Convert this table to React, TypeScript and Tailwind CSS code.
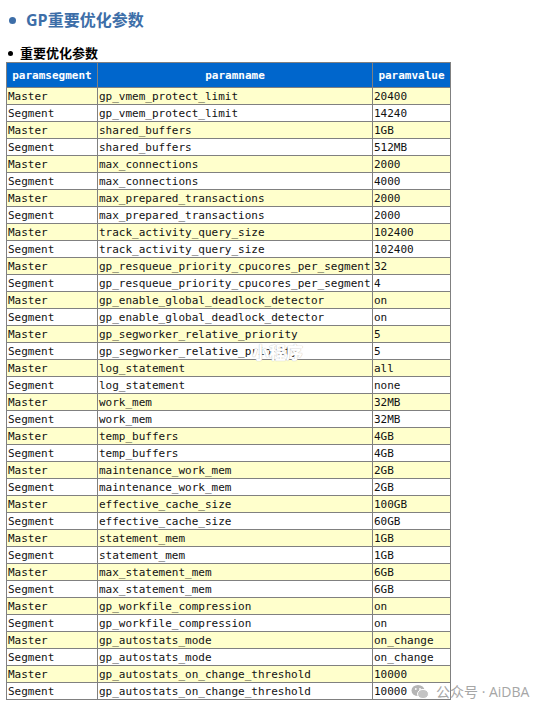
const rows: [string, string][] = [
  ['gp_vmem_protect_limit', '20400'],
  ['gp_vmem_protect_limit', '14240'],
  ['shared_buffers', '1GB'],
  ['shared_buffers', '512MB'],
  ['max_connections', '2000'],
  ['max_connections', '4000'],
  ['max_prepared_transactions', '2000'],
  ['max_prepared_transactions', '2000'],
  ['track_activity_query_size', '102400'],
  ['track_activity_query_size', '102400'],
  ['gp_resqueue_priority_cpucores_per_segment', '32'],
  ['gp_resqueue_priority_cpucores_per_segment', '4'],
  ['gp_enable_global_deadlock_detector', 'on'],
  ['gp_enable_global_deadlock_detector', 'on'],
  ['gp_segworker_relative_priority', '5'],
  ['gp_segworker_relative_priority', '5'],
  ['log_statement', 'all'],
  ['log_statement', 'none'],
  ['work_mem', '32MB'],
  ['work_mem', '32MB'],
  ['temp_buffers', '4GB'],
  ['temp_buffers', '4GB'],
  ['maintenance_work_mem', '2GB'],
  ['maintenance_work_mem', '2GB'],
  ['effective_cache_size', '100GB'],
  ['effective_cache_size', '60GB'],
  ['statement_mem', '1GB'],
  ['statement_mem', '1GB'],
  ['max_statement_mem', '6GB'],
  ['max_statement_mem', '6GB'],
  ['gp_workfile_compression', 'on'],
  ['gp_workfile_compression', 'on'],
  ['gp_autostats_mode', 'on_change'],
  ['gp_autostats_mode', 'on_change'],
  ['gp_autostats_on_change_threshold', '10000'],
  ['gp_autostats_on_change_threshold', '10000'],
];

const mono = "font-['DejaVu_Sans_Mono','Liberation_Mono',monospace]";
const cjk = "font-['Open_Sans','Noto_Sans_CJK_SC',sans-serif]";

export default function App() {
  return (
    <div className="relative w-[554px] h-[715px] bg-white overflow-hidden">
      {/* Title */}
      <div className="flex items-center h-[24px] mt-[8px] pl-[9px] gap-[10px]">
        <span className="w-[7px] h-[7px] rounded-full bg-[#3d6ea8]" />
        <h2 className={`${cjk} text-[16px] font-bold text-[#3d6ea8] leading-none`}>GP重要优化参数</h2>
      </div>

      {/* Subtitle */}
      <div className="flex items-center h-[18px] mt-[12px] pl-[8px] gap-[7px]">
        <span className="w-[5px] h-[5px] rounded-full bg-black" />
        <span className={`${cjk} text-[13px] font-bold text-black leading-none`}>重要优化参数</span>
      </div>

      {/* Table */}
      <table className={`${mono} ml-[6px] w-[444px] table-fixed border-collapse text-[11px] leading-none`}>
        <colgroup>
          <col className="w-[91px]" />
          <col className="w-[275px]" />
          <col className="w-[78px]" />
        </colgroup>
        <thead>
          <tr className="h-[25px] bg-[#0066cc] text-white font-bold">
            <th className="border border-[#808080] px-[1px] text-center">paramsegment</th>
            <th className="border border-[#808080] px-[1px] text-center">paramname</th>
            <th className="border border-[#808080] px-[1px] text-center">paramvalue</th>
          </tr>
        </thead>
        <tbody>
          {rows.map(([name, value], i) => {
            const master = i % 2 === 0;
            return (
              <tr key={i} className={`h-[17px] ${master ? 'bg-[#ffffcc]' : 'bg-white'} text-[#111]`}>
                <td className="border border-[#808080] px-[1px] p-0 whitespace-nowrap">{master ? 'Master' : 'Segment'}</td>
                <td className="border border-[#808080] px-[1px] p-0 whitespace-nowrap overflow-hidden">{name}</td>
                <td className="border border-[#808080] px-[1px] p-0 whitespace-nowrap">{value}</td>
              </tr>
            );
          })}
        </tbody>
      </table>

      {/* Watermarks */}
      <span className={`${cjk} absolute left-[252px] top-[344px] text-[17px] font-bold text-white leading-none [text-shadow:0_0_1px_#c8c8c8,0_0_1px_#c8c8c8]`}>
        小程序
      </span>
      <div className="absolute left-[411px] top-[684px] flex items-center gap-[7px]">
        <svg width="18" height="16" viewBox="0 0 18 16">
          <ellipse cx="7" cy="6.5" rx="6.5" ry="5.5" fill="#b5b5b5" />
          <ellipse cx="12" cy="10" rx="5.5" ry="4.6" fill="#c4c4c4" stroke="#fff" strokeWidth="1" />
          <circle cx="4.8" cy="5" r="0.9" fill="#fff" />
          <circle cx="9" cy="5" r="0.9" fill="#fff" />
        </svg>
        <span className={`${cjk} text-[14px] text-[#a6a6a6] leading-none`}>公众号 · AiDBA</span>
      </div>
    </div>
  );
}
